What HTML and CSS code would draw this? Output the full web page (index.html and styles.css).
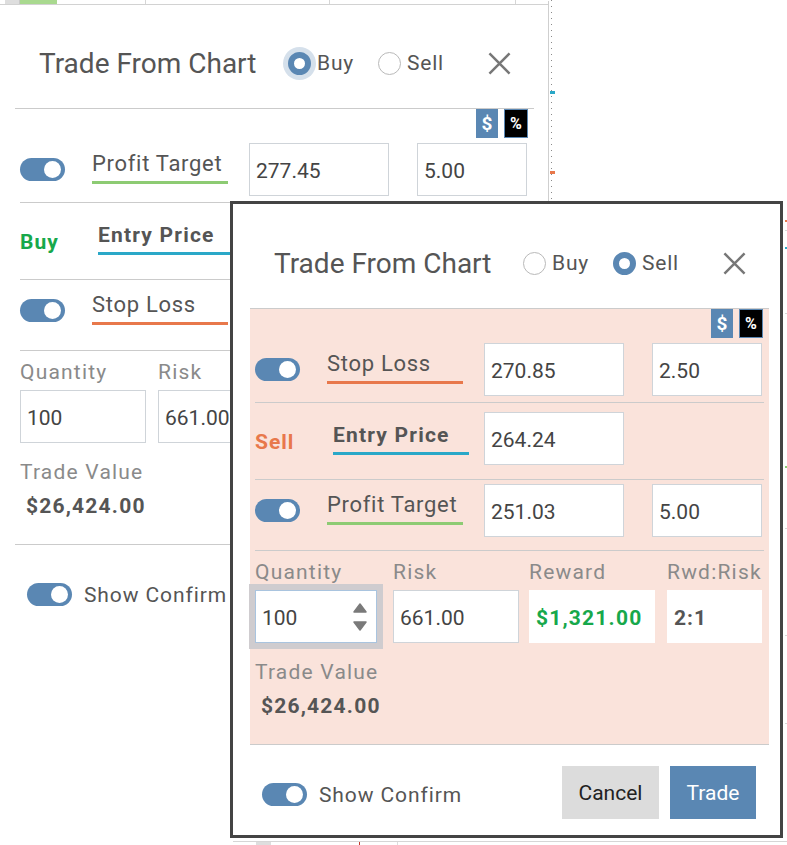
FILE: index.html
```html
<!DOCTYPE html>
<html lang="en">
<head>
  <meta charset="UTF-8" />
  <meta name="viewport" content="width=device-width, initial-scale=1" />
  <title>Trade From Chart</title>
  <link rel="stylesheet" href="styles.css">
</head>
<body>
  <div class="screen">
    <div class="chart-top">
      <span class="cell c-pad"></span>
      <span class="cell c-gray"></span>
      <span class="cell c-green"></span>
      <span class="cell c-w1"></span>
      <span class="cell c-w2"></span>
      <span class="cell c-w3"></span>
    </div>

    <!-- buy ticket, behind (parts covered by the sell ticket are kept for layout but hidden) -->
    <div class="dialog back">
      <div class="dlg-head">
        <div class="dlg-title">Trade From Chart</div>
        <div class="radios">
          <label class="radio on focus"><span class="dot"></span>Buy</label>
          <label class="radio"><span class="dot"></span>Sell</label>
        </div>
        <svg class="close" viewBox="0 0 24 24"><path d="M1.5 1.5L22.5 22.5M22.5 1.5L1.5 22.5" /></svg>
      </div>
      <div class="panel">
        <div class="units"><span class="unit dollar">$</span><span class="unit pct">%</span></div>
        <div class="row r1">
          <div class="side"><span class="toggle"></span></div>
          <div class="lbl"><span class="name u-green">Profit Target</span></div>
          <div class="field">277.45</div>
          <div class="field small">5.00</div>
        </div>
        <div class="row r2">
          <div class="side"><span class="side-txt buy">Buy</span></div>
          <div class="lbl"><span class="name entry">Entry Price</span></div>
          <div class="field hid">264.24</div>
        </div>
        <div class="row r3">
          <div class="side"><span class="toggle"></span></div>
          <div class="lbl"><span class="name u-orange">Stop Loss</span></div>
          <div class="field hid">257.63</div>
          <div class="field small hid">2.50</div>
        </div>
        <div class="qsec">
          <div class="qgrid">
            <div class="qlabel">Quantity</div>
            <div class="qlabel">Risk</div>
            <div class="qlabel hid">Reward</div>
            <div class="qlabel hid">Rwd:Risk</div>
            <div class="field">100</div>
            <div class="field">661.00</div>
            <div class="field out reward hid">$1,321.00</div>
            <div class="field out ratio hid">2:1</div>
          </div>
          <div class="qlabel tv">Trade Value</div>
          <div class="tv-val">$26,424.00</div>
        </div>
      </div>
      <div class="dlg-foot">
        <span class="toggle"></span>
        <span class="confirm">Show Confirm</span>
        <button class="btn cancel hid">Cancel</button>
        <button class="btn trade hid">Trade</button>
      </div>
    </div>

    <div class="axis">
      <span class="mark m-blue"></span>
      <span class="mark m-orange"></span>
    </div>

    <!-- sell ticket, in front -->
    <div class="dialog front">
      <div class="dlg-head">
        <div class="dlg-title">Trade From Chart</div>
        <div class="radios">
          <label class="radio"><span class="dot"></span>Buy</label>
          <label class="radio on"><span class="dot"></span>Sell</label>
        </div>
        <svg class="close" viewBox="0 0 24 24"><path d="M1.5 1.5L22.5 22.5M22.5 1.5L1.5 22.5" /></svg>
      </div>
      <div class="panel">
        <div class="units"><span class="unit dollar">$</span><span class="unit pct">%</span></div>
        <div class="row r1">
          <div class="side"><span class="toggle"></span></div>
          <div class="lbl"><span class="name u-orange">Stop Loss</span></div>
          <div class="field">270.85</div>
          <div class="field small">2.50</div>
        </div>
        <div class="row r2">
          <div class="side"><span class="side-txt sell">Sell</span></div>
          <div class="lbl"><span class="name entry">Entry Price</span></div>
          <div class="field">264.24</div>
        </div>
        <div class="row r3">
          <div class="side"><span class="toggle"></span></div>
          <div class="lbl"><span class="name u-green">Profit Target</span></div>
          <div class="field">251.03</div>
          <div class="field small">5.00</div>
        </div>
        <div class="qsec">
          <div class="qgrid">
            <div class="qlabel">Quantity</div>
            <div class="qlabel">Risk</div>
            <div class="qlabel">Reward</div>
            <div class="qlabel">Rwd:Risk</div>
            <div class="field focused">100
              <svg class="spin" viewBox="0 0 14 28"><path d="M7 1L13 9H1Z" /><path d="M1 19H13L7 27Z" /></svg>
            </div>
            <div class="field">661.00</div>
            <div class="field out reward">$1,321.00</div>
            <div class="field out ratio">2:1</div>
          </div>
          <div class="qlabel tv">Trade Value</div>
          <div class="tv-val">$26,424.00</div>
        </div>
      </div>
      <div class="dlg-foot">
        <span class="toggle"></span>
        <span class="confirm">Show Confirm</span>
        <button class="btn cancel">Cancel</button>
        <button class="btn trade">Trade</button>
      </div>
    </div>

    <div class="axis-right">
      <span class="rmark r-orange" style="top:19px"></span>
      <span class="rmark r-tick" style="top:29px"></span>
      <span class="rmark r-blue" style="top:46px"></span>
      <span class="rmark r-tick" style="top:112px"></span>
      <span class="rmark r-green" style="top:265px"></span>
      <span class="rmark r-tick" style="top:327px"></span>
      <span class="rmark r-tick" style="top:434px"></span>
      <span class="rmark r-tick" style="top:522px"></span>
    </div>

    <div class="chart-bottom">
      <span class="b-gray"></span>
      <span class="b-red"></span>
      <span class="b-tick"></span>
    </div>
  </div>
</body>
</html>
```

FILE: styles.css
```css
html, body {
  margin: 0;
  padding: 0;
  background: #fff;
  font-family: Roboto, "Liberation Sans", sans-serif;
  color: #555;
  overflow: hidden;
}
.screen {
  position: relative;
  width: 787px;
  height: 845px;
  overflow: hidden;
}
.hid {
  visibility: hidden;
}

/* chart bits peeking around the tickets */
.chart-top {
  display: flex;
  width: 549px;
  height: 4px;
  border-bottom: 1px solid #d2d2d2;
}
.cell {
  display: block;
  height: 4px;
}
.c-pad { width: 5px; }
.c-gray { width: 14px; background: #dedede; border-right: 1px solid #c8c8c8; }
.c-green { width: 37px; background: #a9d98f; }
.c-w1 { width: 88px; border-right: 1px solid #d6d6d6; }
.c-w2 { width: 183px; border-right: 1px solid #d6d6d6; }
.c-w3 { width: 185px; border-right: 1px solid #d6d6d6; }

.axis {
  position: absolute;
  left: 551px;
  top: 0;
  width: 1px;
  height: 200px;
  background: repeating-linear-gradient(to bottom, #8a8a8a 0 1px, transparent 1px 6px);
}
.mark {
  position: absolute;
  left: -1px;
  width: 5px;
  height: 3px;
}
.m-blue { top: 91px; background: #2aa8c8; }
.m-orange { top: 171px; background: #e8784b; }

.axis-right {
  position: absolute;
  left: 784px;
  top: 201px;
  width: 3px;
  height: 644px;
}
.rmark {
  position: absolute;
  left: 1px;
  width: 3px;
  height: 2px;
}
.r-orange { background: #e8784b; }
.r-blue { background: #2aa8c8; }
.r-green { background: #8dcb73; }
.r-tick { background: #d8d8d8; height: 1px; }

.chart-bottom {
  position: absolute;
  left: 233px;
  top: 841px;
  width: 554px;
  height: 4px;
  border-top: 1px solid #d6d6d6;
}
.b-gray {
  position: absolute;
  left: 23px;
  top: 0;
  width: 15px;
  height: 4px;
  background: #dedede;
}
.b-red {
  position: absolute;
  left: 126px;
  top: 0;
  width: 1px;
  height: 4px;
  background: #c0392b;
}
.b-tick {
  position: absolute;
  left: 164px;
  top: 0;
  width: 1px;
  height: 4px;
  background: #ddd;
}

/* ticket */
.dialog {
  box-sizing: border-box;
  width: 553px;
  height: 637px;
  border: 3px solid #444;
  background: #fff;
  display: flex;
  flex-direction: column;
}
.dialog.back {
  margin: -4px 0 0 -5px;
  border-color: transparent;
  background: transparent;
  box-shadow: 1px 0 0 #cfcfcf;
}
.dialog.front {
  position: absolute;
  left: 230px;
  top: 201px;
  z-index: 2;
}

.dlg-head {
  box-sizing: border-box;
  height: 104px;
  padding: 14px 34px 0 41px;
  display: flex;
  align-items: center;
}
.dlg-title {
  width: 249px;
  font-size: 28px;
  letter-spacing: 0;
  color: #555;
  white-space: nowrap;
}
.radios {
  display: flex;
  gap: 24px;
}
.radio {
  display: flex;
  align-items: center;
  gap: 6px;
  font-size: 21px;
  letter-spacing: 0.8px;
  color: #555;
}
.radio .dot {
  box-sizing: border-box;
  width: 23px;
  height: 23px;
  border-radius: 50%;
  border: 1.5px solid #b9b9b9;
  background: #fff;
}
.radio.on .dot {
  border: 6px solid #5a87b3;
}
.radio.focus .dot {
  box-shadow: 0 0 0 5px #d5e0eb;
}
.close {
  margin-left: auto;
  width: 23px;
  height: 23px;
  fill: none;
  stroke: #777;
  stroke-width: 2.6;
}

.panel {
  box-sizing: border-box;
  height: 437px;
  margin: 0 11px 0 17px;
  padding: 0 5px;
  border-top: 1px solid #cbcbcb;
  border-bottom: 1px solid #cbcbcb;
}
.front .panel {
  background: #fae3db;
}
.units {
  display: flex;
  justify-content: flex-end;
  gap: 6px;
  height: 29px;
  padding-right: 1px;
}
.unit {
  box-sizing: border-box;
  height: 29px;
  display: flex;
  align-items: center;
  justify-content: center;
  color: #fff;
  font-weight: bold;
}
.dollar {
  width: 22px;
  background: #5a87b3;
  font-size: 19px;
}
.pct {
  width: 24px;
  background: #000;
  border: 1px solid #5a87b3;
  font-size: 16px;
}

.row {
  display: flex;
  align-items: center;
  border-bottom: 1px solid #cbcbcb;
}
.r1 { padding: 5px 0 6px; }
.r2 { padding: 9px 0 14px; }
.r3 { padding: 4px 0 13px; }
.side {
  width: 72px;
}
.toggle {
  display: block;
  position: relative;
  width: 45px;
  height: 23px;
  border-radius: 12px;
  background: #5a87b3;
}
.toggle::after {
  content: "";
  position: absolute;
  right: 4px;
  top: 3px;
  width: 17px;
  height: 17px;
  border-radius: 50%;
  background: #fff;
}
.side-txt {
  display: block;
  margin-top: 6px;
  font-size: 21px;
  font-weight: bold;
  letter-spacing: 1px;
}
.side-txt.buy { color: #17a84b; }
.side-txt.sell { color: #e8784b; }
.lbl {
  width: 157px;
}
.name {
  display: inline-block;
  box-sizing: border-box;
  width: 136px;
  font-size: 22px;
  line-height: 25px;
  letter-spacing: 0.7px;
  padding-bottom: 5px;
  margin-bottom: 5px;
  border-bottom: 3px solid transparent;
  white-space: nowrap;
}
.u-green { border-bottom-color: #8dcb73; }
.u-orange { border-bottom-color: #e8784b; }
.name.entry {
  margin: 0 0 0 6px;
  padding-bottom: 4px;
  font-size: 21px;
  font-weight: bold;
  letter-spacing: 1.2px;
  border-bottom-color: #2aa8c8;
}

.field {
  box-sizing: border-box;
  position: relative;
  width: 140px;
  height: 53px;
  padding: 3px 0 0 6px;
  display: flex;
  align-items: center;
  background: #fff;
  border: 1px solid #cfd4d9;
  font-size: 21px;
  color: #444;
}
.field.small {
  width: 110px;
  margin-left: 28px;
}

.qsec {
  padding-top: 9px;
}
.qgrid {
  display: grid;
  grid-template-columns: 138px 136px 138px 95px;
  row-gap: 5px;
}
.qgrid .field {
  width: 126px;
}
.qgrid .field.ratio {
  width: 95px;
}
.qlabel {
  font-size: 21px;
  line-height: 25px;
  letter-spacing: 1.2px;
  color: #8a8a8a;
}
.field.out {
  border-color: #fff;
  font-weight: bold;
}
.reward {
  color: #17a84b;
  letter-spacing: 1.2px;
}
.ratio {
  color: #555;
  letter-spacing: 1px;
}
.field.focused {
  width: 122px;
  border-color: #a9c4df;
  box-shadow: 0 0 0 6px #cfcccf;
}
.spin {
  position: absolute;
  right: 9px;
  top: 12px;
  width: 14px;
  height: 28px;
  fill: #7a7a7a;
  stroke: #7a7a7a;
  stroke-width: 1.5;
  stroke-linejoin: round;
}
.qlabel.tv {
  margin-top: 17px;
}
.tv-val {
  margin-top: 9px;
  padding-left: 6px;
  font-size: 21px;
  line-height: 24px;
  font-weight: bold;
  letter-spacing: 1.2px;
  color: #555;
}

.dlg-foot {
  flex: 1;
  display: flex;
  align-items: center;
  padding: 5px 24px 0 29px;
}
.dlg-foot .toggle {
  margin-top: 3px;
}
.confirm {
  margin-left: 12px;
  margin-top: 5px;
  font-size: 21px;
  letter-spacing: 0.9px;
  color: #555;
}
.btn {
  height: 53px;
  border: none;
  font-family: inherit;
  font-size: 21px;
  cursor: pointer;
}
.cancel {
  margin-left: auto;
  width: 97px;
  background: #dcdcdc;
  color: #222;
}
.trade {
  margin-left: 11px;
  width: 86px;
  background: #5a87b3;
  color: #fff;
}
```
